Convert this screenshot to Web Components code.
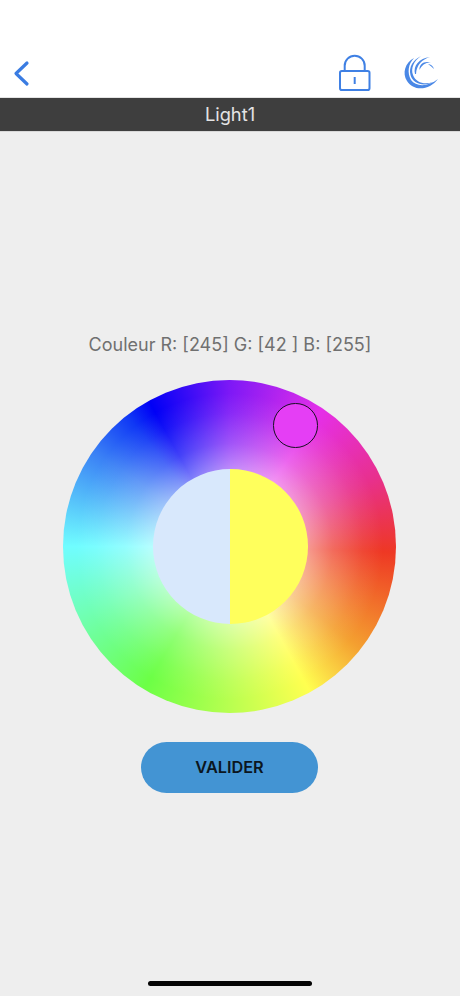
<!DOCTYPE html>
<html lang="fr">
<head>
<meta charset="utf-8">
<title>Light1</title>
<style>
html,body{margin:0;padding:0;height:996px;overflow:hidden;background:#eeeeee;font-family:Inter,"Liberation Sans",sans-serif}
body{display:flex;flex-direction:column}
</style>
</head>
<body>
<app-header></app-header>
<title-bar>Light1</title-bar>
<color-panel r="245" g="42 " b="255"></color-panel>
<home-indicator></home-indicator>
<script>
function shadow(el, html){ el.attachShadow({mode:'open'}).innerHTML = html; }

customElements.define('app-header', class extends HTMLElement{
  connectedCallback(){
    shadow(this, `<style>
      :host{display:flex;align-items:flex-start;justify-content:space-between;height:97px;background:#fff;border-bottom:1px solid #e4e4e4;flex:none}
      svg{display:block;flex:none}
      .back{margin:60px 0 0 12px}
      .right{display:flex;margin:52px 22px 0 0;gap:31px;align-items:flex-start}
    </style>
    <svg class="back" width="20" height="28" viewBox="0 0 20 28" fill="none" aria-label="Retour"><path d="M15 3 4 13.500 15 24" stroke="#3a7ce2" stroke-width="3.200" stroke-linecap="round" stroke-linejoin="round"/></svg>
    <div class="right">
      <svg width="34" height="42" viewBox="0 0 34 42" fill="none" stroke="#3f80e4" aria-label="Verrou">
        <rect x="3" y="19" width="29.500" height="19" rx="1.800" stroke-width="2"/>
        <path d="M7.700 19v-5.300a10 10 0 0 1 20 0V19" stroke-width="2"/>
        <path d="M17.700 25v7" stroke-width="2"/>
      </svg>
      <svg width="36" height="40" viewBox="402 52 36 40" aria-label="Logo" fill="#4a88e6">
        <path d="M438 79C430 90 414 92 407 81C402 73 405 63 414 58C408 64 407 73 411 80C416 87 428 87 438 79Z"/>
        <path d="M433 82C424 87 413 84 410.500 75C408.500 67 413 60 421 56C414 61 410.500 68 413 75C416 83 425 85 433 82Z"/>
        <path d="M415 74C413 66 419 58 430 57C422 59.500 416.500 65 416 74Z"/>
        <path d="M419.500 70C419 64 424 60.500 431 62.500C426 62 421.500 65 419.500 70Z"/>
        <path d="M428 64C431 64.500 433 66 434 69C432 67 430 65.500 428 64Z"/>
      </svg>
    </div>`);
  }
});

customElements.define('title-bar', class extends HTMLElement{
  connectedCallback(){
    shadow(this, `<style>
      :host{display:flex;align-items:center;justify-content:center;height:33px;flex:none;background:#3e3e3e;color:#e4e4e4;font:400 18.300px/1 Inter,"Liberation Sans",sans-serif;border-bottom:1px solid #d8d8d8}
    </style><slot></slot>`);
  }
});

customElements.define('color-wheel', class extends HTMLElement{
  connectedCallback(){
    shadow(this, `<style>
      :host{display:block;position:relative;width:333px;height:333px;flex:none;border-radius:50%;
        background:
          radial-gradient(circle closest-side, rgba(255,255,255,.8) 0%, rgba(255,255,255,.5) 46%, rgba(255,255,255,.26) 62%, rgba(255,255,255,.08) 80%, rgba(255,255,255,0) 92%),
          conic-gradient(from 0deg, #7d18f6 0deg, #e52fe8 34deg, #e8308c 65deg, #ee3824 92deg, #f4a030 128deg, #fbd845 142deg, #ffff50 151deg, #e4ff50 162deg, #b8ff50 180deg, #6cff46 211deg, #70ffb4 245deg, #70fdff 270deg, #3a80f5 305deg, #1038f5 322deg, #0000f6 331deg, #3a0cf6 345deg, #7d18f6 360deg);
      }
      .center{position:absolute;left:90px;top:89px;width:155px;height:155px;border-radius:50%;background:linear-gradient(90deg,#d8e8fc 77px,#ffff5c 77px)}
      .marker{position:absolute;left:210px;top:23px;width:44.500px;height:44.500px;box-sizing:border-box;border-radius:50%;background:#e53ef5;border:1.500px solid #161020}
    </style><div class="center"></div><div class="marker"></div>`);
  }
});

customElements.define('pill-button', class extends HTMLElement{
  connectedCallback(){
    shadow(this, `<style>
      :host{display:flex;align-items:center;justify-content:center;width:177px;height:51px;border-radius:26px;background:#4394d3;color:#0b1620;font:600 16.300px/1 Inter,"Liberation Sans",sans-serif;flex:none}
    </style><slot></slot>`);
  }
});

customElements.define('color-panel', class extends HTMLElement{
  connectedCallback(){
    const r=this.getAttribute('r'),g=this.getAttribute('g'),b=this.getAttribute('b');
    shadow(this, `<style>
      :host{display:flex;flex-direction:column;align-items:center;flex:1;min-height:0}
      .label{margin-top:202px;color:#707070;font:400 18px/22px Inter,"Liberation Sans",sans-serif;white-space:pre}
      pill-button{margin:29px 1px 0 0}
      color-wheel{margin:24px 1px 0 0}
    </style>
    <div class="label">Couleur R: [${r}] G: [${g}] B: [${b}]</div>
    <color-wheel></color-wheel>
    <pill-button>VALIDER</pill-button>`);
  }
});

customElements.define('home-indicator', class extends HTMLElement{
  connectedCallback(){
    shadow(this, `<style>
      :host{display:flex;justify-content:center;height:15px;flex:none}
      div{width:164px;height:5px;border-radius:3px;background:#050505}
    </style><div></div>`);
  }
});
</script>
</body>
</html>
